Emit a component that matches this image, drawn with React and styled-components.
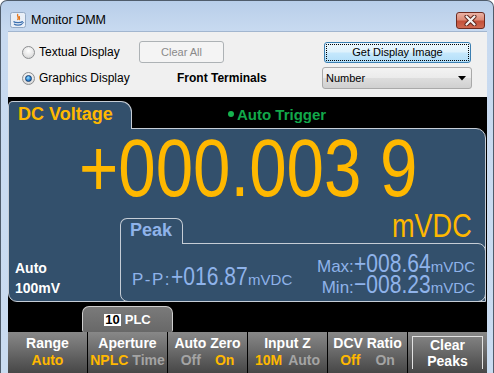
import React from 'react';
import styled, { createGlobalStyle } from 'styled-components';

const GlobalStyle = createGlobalStyle`
  html, body {
    margin: 0;
    padding: 0;
    background: #ffffff;
    overflow: hidden;
  }
  body {
    font-family: "Liberation Sans", Arial, sans-serif;
  }
`;

const PANEL = '#33506c';
const EDGE = '#c6cdd6';
const YELLOW = '#ffb800';
const PEAK = '#8fb3ea';

const Window = styled.div`
  width: 494px;
  height: 373px;
  box-sizing: border-box;
  border: 1px solid #4f5c6b;
  border-bottom: none;
  border-radius: 7px 7px 0 0;
  background: linear-gradient(180deg, #b8cee9 0, #c8daf0 30px, #cadcf1 100%);
  display: flex;
  flex-direction: column;
  overflow: hidden;
`;

const TitleBar = styled.div`
  height: 30px;
  box-sizing: border-box;
  padding: 8px 8px 0 9px;
  display: flex;
  align-items: center;
  gap: 5px;
`;

const Title = styled.span`
  font-size: 12.5px;
  color: #000;
  flex: 1;
`;

const CloseButton = styled.div`
  width: 29px;
  height: 17px;
  box-sizing: border-box;
  border: 1px solid #6e2b20;
  border-radius: 3px;
  background: linear-gradient(180deg, #eab2a5 0, #dd8c78 45%, #c4513a 55%, #cf6a52 100%);
  display: grid;
  place-items: center;
`;

const Client = styled.div`
  flex: 1;
  margin: 0 6px 0 7px;
  display: flex;
  flex-direction: column;
  min-height: 0;
`;

const Controls = styled.div`
  height: 66px;
  box-sizing: border-box;
  border-top: 1px solid #a2b6cf;
  background: #f0f0f0;
  padding: 9px 0 0 14px;
  display: grid;
  grid-template-columns: 117px 185px 152px;
  grid-template-rows: 22px 22px;
  row-gap: 4px;
  align-items: center;
  font-size: 12px;
  color: #000;
`;

const RadioLabel = styled.label`
  display: flex;
  align-items: center;
  gap: 4px;
  white-space: nowrap;
`;

const RadioCircle = styled.span`
  width: 13px;
  height: 13px;
  box-sizing: border-box;
  border-radius: 50%;
  border: 1px solid #8c8e90;
  background: radial-gradient(circle at 50% 35%, #ffffff 0, #e6e6e6 55%, #c9c9c9 100%);
  display: grid;
  place-items: center;
  &::after {
    content: '';
    display: ${(p) => (p.$checked ? 'block' : 'none')};
    width: 7px;
    height: 7px;
    box-sizing: border-box;
    border-radius: 50%;
    border: 1px solid #163d6e;
    background: radial-gradient(circle at 40% 35%, #9be0ff 0, #2a86d6 55%, #0f4f9a 100%);
  }
`;

const Button = styled.div`
  box-sizing: border-box;
  width: ${(p) => p.$w}px;
  height: ${(p) => p.$h}px;
  border-radius: 3px;
  font-size: 11px;
  display: grid;
  place-items: center;
  border: 1px solid ${(p) => (p.$disabled ? '#adb2b5' : '#3c7fb1')};
  color: ${(p) => (p.$disabled ? '#8a8a8a' : '#000')};
  background: ${(p) =>
    p.$disabled
      ? '#f4f4f4'
      : 'linear-gradient(180deg, #ecf7fd 0, #dff2fc 45%, #c4e7fc 55%, #b3dff9 100%)'};
  outline: ${(p) => (p.$focused ? '1px dotted #000' : 'none')};
  outline-offset: -3px;
`;

const FrontLabel = styled.span`
  font-weight: bold;
  margin-left: 38px;
  white-space: nowrap;
`;

const Combo = styled.div`
  box-sizing: border-box;
  width: 150px;
  height: 22px;
  margin-left: -2px;
  border: 1px solid #a9a9a9;
  border-radius: 3px;
  background: linear-gradient(180deg, #f3f3f3 0, #ebebeb 48%, #dddddd 52%, #d0d0d0 100%);
  display: flex;
  align-items: center;
  justify-content: space-between;
  padding: 0 5px 0 3px;
  font-size: 11px;
`;

const Display = styled.div`
  flex: 1;
  background: #000;
  padding-top: 4px;
  display: flex;
  flex-direction: column;
`;

const Panel = styled.div`
  margin-right: 1px;
  display: flex;
  flex-direction: column;
`;

const PanelHeader = styled.div`
  height: 27px;
  display: flex;
  align-items: flex-end;
`;

const FunctionTab = styled.div`
  position: relative;
  z-index: 1;
  width: 124px;
  height: 28px;
  margin-bottom: -1px;
  box-sizing: border-box;
  border: 1px solid ${EDGE};
  border-bottom: none;
  border-radius: 5px 11px 0 0;
  background: ${PANEL};
  color: ${YELLOW};
  font-weight: bold;
  font-size: 18px;
  line-height: 22px;
  padding: 1px 0 0 9px;
  white-space: nowrap;
`;

const Trigger = styled.div`
  align-self: center;
  margin: 0 0 1px 96px;
  display: flex;
  align-items: center;
  gap: 3px;
  color: #12a84a;
  font-weight: bold;
  font-size: 15px;
  &::before {
    content: '';
    width: 6px;
    height: 6px;
    border-radius: 50%;
    background: #16b24f;
  }
`;

const PanelBody = styled.div`
  height: 174px;
  box-sizing: border-box;
  border: 1px solid ${EDGE};
  border-radius: 0 10px 0 9px;
  background: ${PANEL};
  display: flex;
  flex-direction: column;
`;

/* the meter uses a narrow face; squeeze a regular one to the same width */
const Condensed = styled.span`
  display: inline-block;
  flex-shrink: 0;
  width: ${(p) => p.$w}px;
  white-space: nowrap;
`;

const Squeeze = styled.span`
  display: inline-block;
  transform: scaleX(${(p) => p.$s});
  transform-origin: 0 50%;
`;

const Reading = styled.div`
  margin-top: 4px;
  height: 70px;
  padding-right: 68px;
  display: flex;
  justify-content: flex-end;
  font-size: 82px;
  line-height: 70px;
  color: ${YELLOW};
`;

const LowerRow = styled.div`
  flex: 1;
  display: flex;
  align-items: flex-end;
`;

const RangeInfo = styled.div`
  width: 111px;
  flex-shrink: 0;
  box-sizing: border-box;
  padding: 0 0 3px 6px;
  color: #fff;
  font-weight: bold;
  font-size: 14px;
  line-height: 20px;
`;

const PeakBox = styled.div`
  flex: 1;
  min-width: 0;
  display: flex;
  flex-direction: column;
`;

const PeakHeader = styled.div`
  display: flex;
  align-items: flex-end;
  justify-content: space-between;
`;

const PeakTab = styled.div`
  position: relative;
  z-index: 1;
  width: 63px;
  height: 26px;
  margin-bottom: -1px;
  box-sizing: border-box;
  border: 1px solid ${EDGE};
  border-bottom: none;
  border-radius: 7px 7px 0 0;
  background: ${PANEL};
  color: ${PEAK};
  font-weight: bold;
  font-size: 18px;
  line-height: 22px;
  padding-left: 9px;
`;

const Unit = styled.div`
  font-size: 33px;
  line-height: 33px;
  color: ${YELLOW};
  margin: 0 12px 1px 0;
`;

const PeakBody = styled.div`
  height: 59px;
  box-sizing: border-box;
  margin: 0 -1px -1px 0;
  border: 1px solid ${EDGE};
  border-radius: 0 8px 8px 8px;
  padding: 0 10px 4px 11px;
  display: flex;
  align-items: flex-end;
  justify-content: space-between;
  color: ${PEAK};
`;

const StatLine = styled.div`
  display: flex;
  align-items: baseline;
  justify-content: ${(p) => (p.$right ? 'flex-end' : 'flex-start')};
  font-size: 26px;
  line-height: ${(p) => p.$lh}px;
  white-space: nowrap;
`;

const StatLabel = styled.span`
  font-size: 17px;
  line-height: 14px;
  letter-spacing: ${(p) => p.$spread || 0}px;
`;

const StatUnit = styled.span`
  font-size: 15px;
  line-height: 14px;
`;

const StatColumn = styled.div`
  display: flex;
  flex-direction: column;
  margin-bottom: 2px;
`;

const PPWrap = styled.div`
  margin-bottom: 8px;
`;

const ApertureTab = styled.div`
  margin: 4px 0 0 74px;
  width: 91px;
  height: 26px;
  box-sizing: border-box;
  border: 1px solid #cfcfcf;
  border-bottom: none;
  border-radius: 7px 7px 2px 2px;
  background: linear-gradient(180deg, #7a7a7a 0, #686868 100%);
  display: flex;
  align-items: center;
  justify-content: center;
  gap: 4px;
  color: #fff;
  font-weight: bold;
  font-size: 13px;
`;

const Inverse = styled.span`
  background: #fff;
  color: #000;
  padding: 0 1px;
  line-height: 12px;
`;

const SoftKeys = styled.div`
  height: 41px;
  display: grid;
  grid-template-columns: repeat(6, 1fr);
  column-gap: 1px;
  background: #000;
`;

const Key = styled.div`
  background: linear-gradient(180deg, #888888 0, #727272 35%, #5a5a5a 70%, #474747 100%);
  padding: ${(p) => (p.$boxed ? '4px' : '3px 0 0')};
  display: flex;
  flex-direction: column;
  align-items: stretch;
  font-weight: bold;
  font-size: 14px;
  line-height: 17px;
  color: #fff;
  text-align: center;
  white-space: nowrap;
`;

const KeyBox = styled.div`
  flex: 1;
  border: 1px solid #e2e2e2;
  border-bottom: none;
  line-height: 16px;
`;

const KeyValues = styled.div`
  display: flex;
  justify-content: center;
  gap: ${(p) => p.$gap}px;
`;

const Opt = styled.span`
  color: ${(p) => (p.$on ? YELLOW : '#a4a4a4')};
`;

function Narrow({ w, s = 0.81, children }) {
  return (
    <Condensed $w={w}>
      <Squeeze $s={s}>{children}</Squeeze>
    </Condensed>
  );
}

function JavaIcon() {
  return (
    <svg width="16" height="16" viewBox="0 0 16 16">
      <rect x="0.5" y="0.5" width="15" height="15" rx="2" fill="#e9eff7" stroke="#93a9c4" />
      <path d="M8 2 C6 4 10 5 7.5 8 M9.5 4 C8.5 5.5 10.5 6 9 8" fill="none" stroke="#e4761b" strokeWidth="1.3" />
      <path d="M3.5 9.5 C5 11 11 11 12.5 9.5 M4 12 C6 13.5 10 13.5 12 12" fill="none" stroke="#3a6fb0" strokeWidth="1.2" />
      <path d="M12 9.8 C14 9.5 14 11.5 11.8 11.6" fill="none" stroke="#3a6fb0" strokeWidth="1" />
    </svg>
  );
}

function CloseGlyph() {
  return (
    <svg width="13" height="11" viewBox="0 0 13 11">
      <path d="M2.5 1.5 L10.5 9.5 M10.5 1.5 L2.5 9.5" stroke="#5a2118" strokeWidth="4" strokeLinecap="round" />
      <path d="M2.5 1.5 L10.5 9.5 M10.5 1.5 L2.5 9.5" stroke="#f4f4f4" strokeWidth="2.2" strokeLinecap="round" />
    </svg>
  );
}

function ComboArrow() {
  return (
    <svg width="8" height="5" viewBox="0 0 8 5">
      <path d="M0 0 H8 L4 4.5 Z" fill="#000" />
    </svg>
  );
}

const softKeys = [
  { label: 'Range', gap: 5, values: [['Auto', true]] },
  { label: 'Aperture', gap: 4, values: [['NPLC', true], ['Time', false]] },
  { label: 'Auto Zero', gap: 14, values: [['Off', false], ['On', true]] },
  { label: 'Input Z', gap: 6, values: [['10M', true], ['Auto', false]] },
  { label: 'DCV Ratio', gap: 15, values: [['Off', true], ['On', false]] },
];

const stats = [
  { label: 'Max:', value: '+008.64' },
  { label: 'Min:', value: '−008.23' },
];

export default function App() {
  return (
    <>
      <GlobalStyle />
      <Window>
        <TitleBar>
          <JavaIcon />
          <Title>Monitor DMM</Title>
          <CloseButton>
            <CloseGlyph />
          </CloseButton>
        </TitleBar>
        <Client>
          <Controls>
            <RadioLabel>
              <RadioCircle />
              Textual Display
            </RadioLabel>
            <Button $w={85} $h={22} $disabled>
              Clear All
            </Button>
            <Button $w={147} $h={21} $focused>
              Get Display Image
            </Button>
            <RadioLabel>
              <RadioCircle $checked />
              Graphics Display
            </RadioLabel>
            <FrontLabel>Front Terminals</FrontLabel>
            <Combo>
              <span>Number</span>
              <ComboArrow />
            </Combo>
          </Controls>

          <Display>
            <Panel>
              <PanelHeader>
                <FunctionTab>DC Voltage</FunctionTab>
                <Trigger>Auto Trigger</Trigger>
              </PanelHeader>
              <PanelBody>
                <Reading>
                  <Narrow w={338} s={0.82}>
                    +000.003 9
                  </Narrow>
                </Reading>
                <LowerRow>
                  <RangeInfo>
                    <div>Auto</div>
                    <div>100mV</div>
                  </RangeInfo>
                  <PeakBox>
                    <PeakHeader>
                      <PeakTab>Peak</PeakTab>
                      <Unit>
                        <Narrow w={81} s={0.82}>
                          mVDC
                        </Narrow>
                      </Unit>
                    </PeakHeader>
                    <PeakBody>
                      <PPWrap>
                        <StatLine $lh={26}>
                          <StatLabel $spread={1.5}>P-P:</StatLabel>
                          <Narrow w={77}>+016.87</Narrow>
                          <StatUnit>mVDC</StatUnit>
                        </StatLine>
                      </PPWrap>
                      <StatColumn>
                        {stats.map((st) => (
                          <StatLine key={st.label} $right $lh={20}>
                            <StatLabel>{st.label}</StatLabel>
                            <Narrow w={77}>{st.value}</Narrow>
                            <StatUnit>mVDC</StatUnit>
                          </StatLine>
                        ))}
                      </StatColumn>
                    </PeakBody>
                  </PeakBox>
                </LowerRow>
              </PanelBody>
            </Panel>

            <ApertureTab>
              <Inverse>10</Inverse>
              PLC
            </ApertureTab>

            <SoftKeys>
              {softKeys.map((k) => (
                <Key key={k.label}>
                  <div>{k.label}</div>
                  <KeyValues $gap={k.gap}>
                    {k.values.map(([text, on]) => (
                      <Opt key={text} $on={on}>
                        {text}
                      </Opt>
                    ))}
                  </KeyValues>
                </Key>
              ))}
              <Key $boxed>
                <KeyBox>
                  <div>Clear</div>
                  <div>Peaks</div>
                </KeyBox>
              </Key>
            </SoftKeys>
          </Display>
        </Client>
      </Window>
    </>
  );
}
